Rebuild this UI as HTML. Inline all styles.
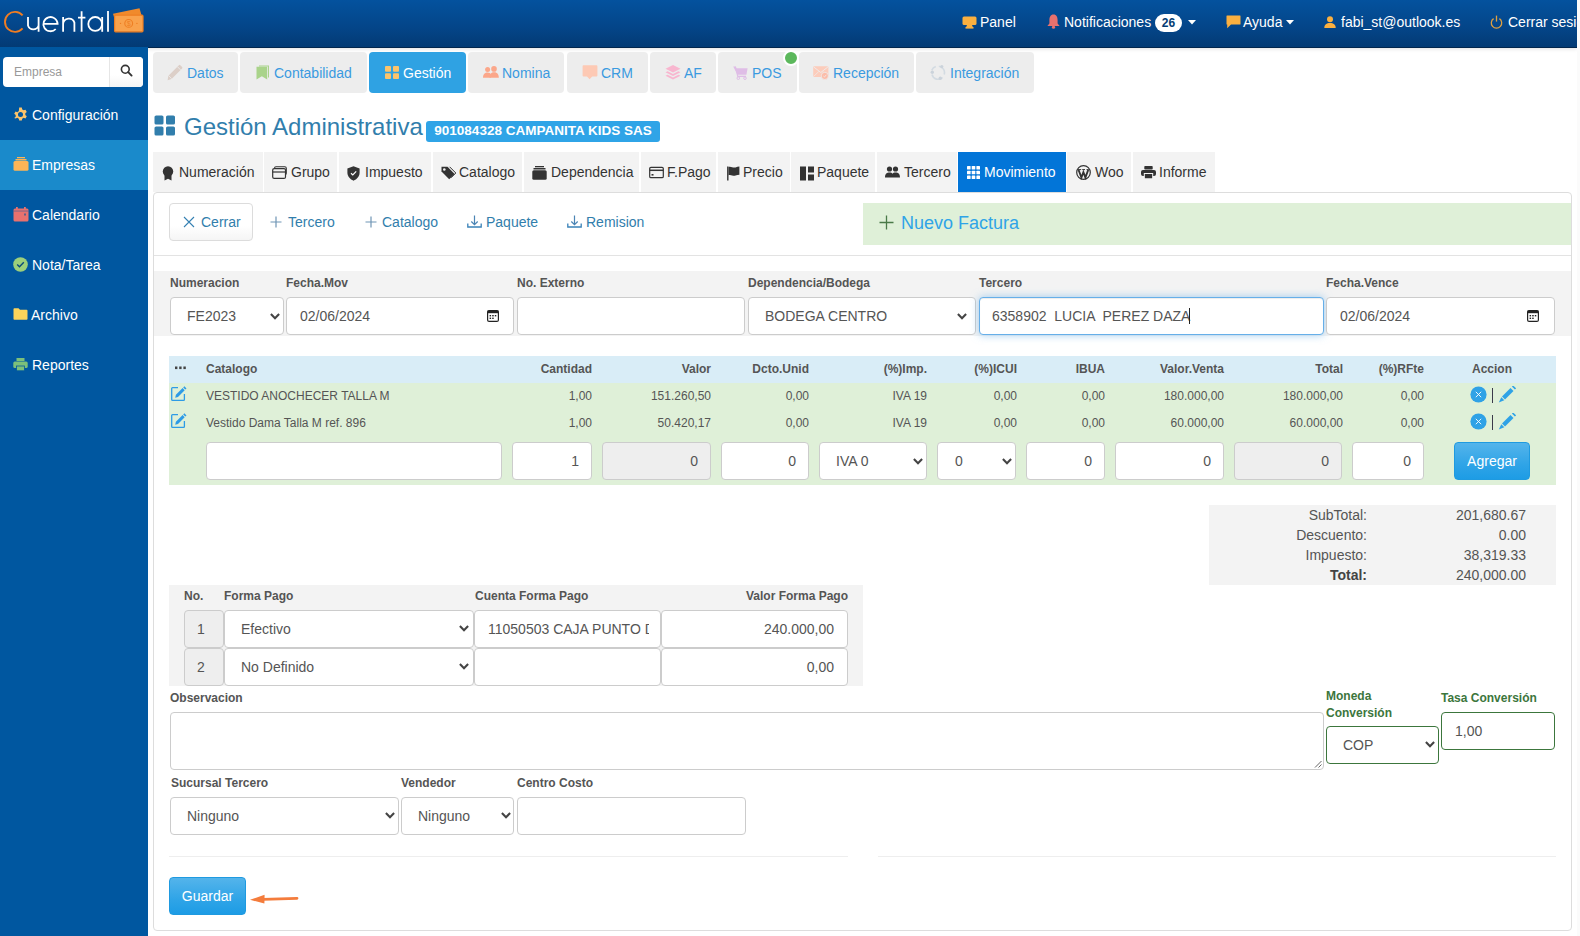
<!DOCTYPE html>
<html><head><meta charset="utf-8">
<style>
*{box-sizing:border-box}
html,body{margin:0;padding:0;width:1580px;height:936px;overflow:hidden;background:#fff;font-family:"Liberation Sans",sans-serif;color:#555}
.a{position:absolute}
svg{display:block}
#nav{left:0;top:0;width:1577px;height:48px;background:linear-gradient(#04529e,#044588 60%,#033a74);border-bottom:1px solid #02264d;box-shadow:0 1px 4px rgba(0,0,0,.12)}
.nt{color:#fff;font-size:14px;line-height:16px;top:14px;white-space:nowrap}
#strip{left:1577px;top:0;width:3px;height:936px;background:#fbfbfb}
#side{left:0;top:47px;width:148px;height:889px;background:#0057a0}
.si{left:0;width:148px;height:50px;color:#fff;font-size:14px}
.si .t{position:absolute;left:32px;top:17px;line-height:16px}
.si svg{position:absolute;left:13px;top:17px}
.tab{top:52px;height:41px;background:#ededed;border-radius:4px;color:#3a9ae0;font-size:14px}
.tab .t{position:absolute;top:13px;line-height:16px;white-space:nowrap}
.tab svg{position:absolute;top:13px}
.st{top:152px;height:40px;background:#f3f3f3;color:#333;font-size:14px}
.st .t{position:absolute;top:12px;line-height:16px;white-space:nowrap}
.st svg{position:absolute;top:13px}
.lbl{font-weight:bold;font-size:12px;line-height:14px;color:#555;white-space:nowrap}
.fc{background:#fff;border:1px solid #ccc;border-radius:4px;height:38px;color:#555;font-size:14px}
.fc .t{position:absolute;top:10px;line-height:16px;white-space:nowrap}
.chev{position:absolute;top:15px}
.th{font-weight:bold;font-size:12px;line-height:14px;color:#555;top:362px;white-space:nowrap}
.td{font-size:12px;line-height:14px;color:#555;white-space:nowrap}
.r{text-align:right}
.dis{background:#eee}
.btnp{background:linear-gradient(#54b4eb,#2fa4e7 60%,#1d9ce5);border:1px solid #1f9ae0;border-radius:4px;color:#fff;font-size:14px}
</style></head><body>

<!-- NAVBAR -->
<div id="nav" class="a"></div>
<div id="strip" class="a"></div>
<!-- logo -->
<svg class="a" style="left:0;top:0" width="150" height="46" viewBox="0 0 150 46">
 <path d="M22.6 15.4 A10 10 0 1 0 22.6 28.4" fill="none" stroke="#f07d22" stroke-width="1.9"/>
 <g fill="none" stroke="#fff" stroke-width="1.8">
  <path d="M28 17 V25.5 A5.6 5.6 0 0 0 38.6 25.5 V17 M38.6 24 V31.8"/>
  <path d="M43.6 23.9 H57.6 A7.1 7.1 0 1 0 55.7 29"/>
  <path d="M63.1 31.8 V17 M63.1 24 A5.8 5.8 0 0 1 74.4 22.6 V31.8"/>
  <path d="M81.6 11.3 V31.8 M78 17.7 H85.4"/>
  <circle cx="95.2" cy="23.9" r="6.9"/>
  <path d="M102.2 17 V31.8"/>
  <path d="M108 11 V31.8"/>
 </g>
 <path d="M113 13.7 L139.5 8.2 L142.3 18 L116 24 Z" fill="#f08a2c"/>
 <rect x="114.6" y="15.2" width="28.4" height="16.6" rx="1" fill="#f9a24c" stroke="#ee7e22" stroke-width="1.2"/>
 <circle cx="128.7" cy="23.4" r="3.9" fill="none" stroke="#ee7e22" stroke-width="1.1"/>
 <text x="128.7" y="26.2" font-size="7" font-family="Liberation Sans" fill="#ee7e22" text-anchor="middle">$</text>
 <circle cx="120.5" cy="23.4" r="0.7" fill="#ee7e22"/><circle cx="136.9" cy="23.4" r="0.7" fill="#ee7e22"/>
</svg>
<!-- nav items -->
<svg class="a" style="left:962px;top:16px" width="15" height="13" viewBox="0 0 15 13"><rect x="0.5" y="0.5" width="14" height="8.5" rx="1.5" fill="#fbb040"/><path d="M5 9 h5 l1 2.5 h-7z" fill="#fbb040"/><rect x="3.5" y="11" width="8" height="1.6" fill="#fbb040"/></svg>
<div class="a nt" style="left:980px">Panel</div>
<svg class="a" style="left:1047px;top:14px" width="13" height="15" viewBox="0 0 13 15"><path d="M6.5 0.5 C9.5 0.5 10.6 3 10.6 6 V9.5 L12.6 12 H0.4 L2.4 9.5 V6 C2.4 3 3.5 0.5 6.5 0.5Z" fill="#e8716e"/><circle cx="6.5" cy="13.2" r="1.6" fill="#e8716e"/></svg>
<div class="a nt" style="left:1064px">Notificaciones</div>
<div class="a" style="left:1155px;top:14px;width:27px;height:18px;border-radius:9px;background:#fff;color:#033c73;font-weight:bold;font-size:12px;line-height:18px;text-align:center">26</div>
<svg class="a" style="left:1188px;top:20px" width="8" height="5" viewBox="0 0 8 5"><path d="M0 0H8L4 4.5Z" fill="#fff"/></svg>
<svg class="a" style="left:1226px;top:15px" width="15" height="14" viewBox="0 0 15 14"><path d="M1 0.5 H14 Q14.5 .5 14.5 1 V9 Q14.5 9.6 14 9.6 H5 L1.2 13.3 V9.6 H1 Q.5 9.6 .5 9 V1 Q.5 .5 1 .5Z" fill="#fbb040"/></svg>
<div class="a nt" style="left:1243px">Ayuda</div>
<svg class="a" style="left:1286px;top:20px" width="8" height="5" viewBox="0 0 8 5"><path d="M0 0H8L4 4.5Z" fill="#fff"/></svg>
<svg class="a" style="left:1324px;top:16px" width="12" height="12" viewBox="0 0 12 12"><circle cx="6" cy="3.2" r="3" fill="#fbb040"/><path d="M0.3 12 C0.3 8.5 2.5 7 6 7 C9.5 7 11.7 8.5 11.7 12Z" fill="#fbb040"/></svg>
<div class="a nt" style="left:1341px">fabi_st@outlook.es</div>
<svg class="a" style="left:1490px;top:15px" width="13" height="14" viewBox="0 0 13 14"><path d="M3.6 3.6 A5.2 5.2 0 1 0 9.4 3.6" fill="none" stroke="#e0a040" stroke-width="1.3"/><path d="M6.5 .6 V6.6" stroke="#e0a040" stroke-width="1.3"/></svg>
<div class="a nt" style="left:1508px;width:69px;overflow:hidden">Cerrar sesión</div>


<!-- SIDEBAR -->
<div id="side" class="a"></div>
<div class="a" style="left:3px;top:57px;width:140px;height:30px;background:#fff;border-radius:4px"></div>
<div class="a" style="left:109px;top:57px;width:34px;height:30px;border-left:1px solid #e6e6e6;border-radius:0 4px 4px 0;background:linear-gradient(#fff,#fff 60%,#f5f5f5)"></div>
<div class="a" style="left:14px;top:65px;font-size:12px;line-height:14px;color:#999">Empresa</div>
<svg class="a" style="left:120px;top:64px" width="13" height="13" viewBox="0 0 13 13"><circle cx="5.3" cy="5.3" r="3.9" fill="none" stroke="#333" stroke-width="1.6"/><path d="M8.2 8.2 L11.6 11.6" stroke="#333" stroke-width="1.9" stroke-linecap="round"/></svg>
<svg class="a" style="left:13px;top:107px" width="15" height="15" viewBox="0 0 16 16"><path fill="#fcc46b" d="M6.6 0.5h2.8l.4 2.1a5.5 5.5 0 0 1 1.5.9l2-.7 1.4 2.4-1.6 1.4a5.5 5.5 0 0 1 0 1.8l1.6 1.4-1.4 2.4-2-.7a5.5 5.5 0 0 1-1.5.9l-.4 2.1H6.6l-.4-2.1a5.5 5.5 0 0 1-1.5-.9l-2 .7L1.3 11.8l1.6-1.4a5.5 5.5 0 0 1 0-1.8L1.3 7.2l1.4-2.4 2 .7a5.5 5.5 0 0 1 1.5-.9z M8 5.3a2.7 2.7 0 1 0 0 5.4 2.7 2.7 0 1 0 0-5.4z" fill-rule="evenodd"/></svg>
<div class="a" style="left:32px;top:107px;color:#fff;font-size:14px;line-height:16px">Configuración</div>
<div class="a" style="left:0;top:140px;width:148px;height:50px;background:#1a8acb"></div>
<svg class="a" style="left:13px;top:157px" width="16" height="14" viewBox="0 0 16 14"><rect x="4" y="0" width="8" height="1.3" fill="#fdb556"/><rect x="2.5" y="2" width="11" height="1.5" fill="#fdb556"/><rect x="0.5" y="4" width="15" height="9.8" rx="1.5" fill="#fdb556"/></svg>
<div class="a" style="left:32px;top:157px;color:#fff;font-size:14px;line-height:16px">Empresas</div>
<svg class="a" style="left:13px;top:207px" width="16" height="15" viewBox="0 0 16 15"><rect x="0.5" y="1.5" width="15" height="13" rx="1.5" fill="#e8716e"/><rect x="3" y="0" width="1.8" height="3" fill="#e8716e"/><rect x="11" y="0" width="1.8" height="3" fill="#e8716e"/><rect x="0.5" y="3.6" width="15" height="0.9" fill="#0057a0" opacity=".5"/><rect x="11" y="6.5" width="2" height="2" fill="#0057a0" opacity=".6"/></svg>
<div class="a" style="left:32px;top:207px;color:#fff;font-size:14px;line-height:16px">Calendario</div>
<svg class="a" style="left:13px;top:257px" width="15" height="15" viewBox="0 0 15 15"><circle cx="7.5" cy="7.5" r="7.3" fill="#9ccf7b"/><path d="M4.2 7.6 L6.5 9.8 L10.8 5.3" fill="none" stroke="#0a4a7a" stroke-width="1.4"/></svg>
<div class="a" style="left:32px;top:257px;color:#fff;font-size:14px;line-height:16px">Nota/Tarea</div>
<svg class="a" style="left:13px;top:308px" width="15" height="12" viewBox="0 0 15 12"><path d="M0.5 1.2 Q.5 .3 1.4 .3 H5.5 L7 1.8 H13.6 Q14.5 1.8 14.5 2.7 V11 Q14.5 11.7 13.6 11.7 H1.4 Q.5 11.7 .5 11Z" fill="#fcd45b"/></svg>
<div class="a" style="left:31px;top:307px;color:#fff;font-size:14px;line-height:16px">Archivo</div>
<svg class="a" style="left:13px;top:358px" width="15" height="13" viewBox="0 0 15 13"><rect x="3.5" y="0" width="8" height="3" fill="#7cc07a"/><rect x="0.3" y="3.5" width="14.4" height="6.5" rx="1.5" fill="#7cc07a"/><rect x="3.5" y="8" width="8" height="4.8" fill="#7cc07a" stroke="#0057a0" stroke-width=".8"/></svg>
<div class="a" style="left:32px;top:357px;color:#fff;font-size:14px;line-height:16px">Reportes</div>



<!-- MAIN TABS -->
<div class="a tab" style="left:153px;width:85px"><svg style="left:14px;top:12px" width="17" height="17" viewBox="0 0 17 17"><path d="M1.4 11.7 L11.9 1.2 Q12.6 .5 13.3 1.2 L15.1 3 Q15.8 3.7 15.1 4.4 L4.6 14.9 L0.6 16.2Z" fill="#dccfc8"/><path d="M10.4 2.7 L13.6 5.9" stroke="#ededed" stroke-width="0.9"/><path d="M1.6 11.6 L4.7 14.7" stroke="#ededed" stroke-width="0.8"/></svg><div class="t" style="left:34px">Datos</div></div>
<div class="a tab" style="left:240px;width:127px"><svg style="left:16px;top:13px" width="14" height="15" viewBox="0 0 14 15"><path d="M3 0.5 H13 V12.5 H12 V1.5 H3Z" fill="#a9d38a"/><path d="M0.5 1.8 H11.2 V14.6 L5.85 11.3 L0.5 14.6Z" fill="#a9d38a"/></svg><div class="t" style="left:34px">Contabilidad</div></div>
<div class="a tab" style="left:369px;width:97px;background:#2fa2e3;color:#fff"><svg style="left:16px;top:14px" width="14" height="13" viewBox="0 0 14 13"><rect x="0" y="0" width="6" height="5.8" rx="1" fill="#fcc46b"/><rect x="8" y="0" width="6" height="5.8" rx="1" fill="#fcc46b"/><rect x="0" y="7.2" width="6" height="5.8" rx="1" fill="#fcc46b"/><rect x="8" y="7.2" width="6" height="5.8" rx="1" fill="#fcc46b"/></svg><div class="t" style="left:34px">Gestión</div></div>
<div class="a tab" style="left:468px;width:96px"><svg style="left:15px;top:14px" width="16" height="12" viewBox="0 0 16 12"><circle cx="4.6" cy="3.4" r="2.5" fill="#fba78a"/><circle cx="11" cy="2.9" r="2.8" fill="#fba78a"/><path d="M0 11.8 C0 8 2 6.6 4.6 6.6 C6.5 6.6 7.5 7.5 7.8 8.5 V11.8Z" fill="#fba78a"/><path d="M6.5 11.8 C6.5 7.5 8.5 6.2 11 6.2 C13.8 6.2 15.8 7.5 15.8 11.8Z" fill="#fba78a"/></svg><div class="t" style="left:34px">Nomina</div></div>
<div class="a tab" style="left:567px;width:81px"><svg style="left:15px;top:13px" width="16" height="15" viewBox="0 0 16 15"><path d="M1.5 0.3 H14.5 Q15.4 .3 15.4 1.2 V10.6 Q15.4 11.5 14.5 11.5 H10.2 L7.6 14.2 L5 11.5 H1.5 Q.6 11.5 .6 10.6 V1.2 Q.6 .3 1.5 .3Z" fill="#fdc9b4"/></svg><div class="t" style="left:34px">CRM</div></div>
<div class="a tab" style="left:650px;width:66px"><svg style="left:15px;top:13px" width="16" height="15" viewBox="0 0 16 15"><path d="M8 0 L15.5 3.8 L8 7.6 L0.5 3.8Z" fill="#f8b6cf"/><path d="M0.5 7.3 L2.6 6.2 L8 9 L13.4 6.2 L15.5 7.3 L8 11.1Z" fill="#f8b6cf"/><path d="M0.5 10.8 L2.6 9.7 L8 12.5 L13.4 9.7 L15.5 10.8 L8 14.6Z" fill="#f8b6cf"/></svg><div class="t" style="left:34px">AF</div></div>
<div class="a tab" style="left:718px;width:79px"><svg style="left:15px;top:14px" width="15" height="14" viewBox="0 0 15 14"><path d="M0.2 0.6 H2.6 L3.3 2.2 H14.6 L13.4 8.8 H4.5Z" fill="#dfbde6"/><path d="M2.4 0.6 L4.8 10.4 H13" fill="none" stroke="#dfbde6" stroke-width="1.2"/><circle cx="5.3" cy="12.2" r="1.3" fill="none" stroke="#dfbde6" stroke-width="1"/><circle cx="12" cy="12.2" r="1.3" fill="none" stroke="#dfbde6" stroke-width="1"/></svg><div class="t" style="left:34px">POS</div></div>
<div class="a" style="left:783px;top:50px;width:16px;height:16px;border-radius:50%;background:#5cb85c;border:2px solid #fff"></div>
<div class="a tab" style="left:799px;width:115px"><svg style="left:14px;top:14px" width="16" height="14" viewBox="0 0 16 14"><rect x="0.2" y="0.2" width="15.2" height="10.8" rx="1" fill="#fcccbb"/><path d="M0.5 0.8 L7.8 6.5 L15 0.8" fill="none" stroke="#ededed" stroke-width="0.9"/><path d="M0.5 10.5 L5.8 5.5 M15 10.5 L9.8 5.5" stroke="#ededed" stroke-width="0.7"/><circle cx="11.8" cy="9.9" r="3.6" fill="#fcbca8" stroke="#ededed" stroke-width="0.8"/><path d="M10.4 10 L11.5 11 L13.3 8.8" fill="none" stroke="#ededed" stroke-width="0.8"/></svg><div class="t" style="left:34px">Recepción</div></div>
<div class="a tab" style="left:916px;width:118px"><svg style="left:14px;top:13px" width="16" height="15" viewBox="0 0 16 15"><path d="M8.8 1.3 A6.3 6.3 0 0 1 14.2 9.5 M12.6 12.5 A6.3 6.3 0 0 1 2 9.5 M1.8 5.2 A6.3 6.3 0 0 1 5.8 1.5" fill="none" stroke="#d3dbe2" stroke-width="1.6"/><circle cx="11.8" cy="1.6" r="1.6" fill="#cbd3db"/><circle cx="2.3" cy="7.2" r="1.7" fill="#cbd3db"/><circle cx="10.3" cy="13.2" r="1.7" fill="#cbd3db"/></svg><div class="t" style="left:34px">Integración</div></div>

<!-- TITLE -->
<svg class="a" style="left:154px;top:115px" width="22" height="21" viewBox="0 0 22 21"><rect x="0.5" y="0.5" width="9" height="9" rx="1.6" fill="#317eac"/><rect x="12" y="0.5" width="9" height="9" rx="1.6" fill="#317eac"/><rect x="0.5" y="11.5" width="9" height="9" rx="1.6" fill="#317eac"/><rect x="12" y="11.5" width="9" height="9" rx="1.6" fill="#317eac"/></svg>
<div class="a" style="left:184px;top:114px;font-size:24px;line-height:26px;color:#317eac;white-space:nowrap">Gestión Administrativa</div>
<div class="a" style="left:426px;top:121px;width:234px;height:21px;border-radius:3px;background:#2fa4e7;color:#fff;font-weight:bold;font-size:13.5px;line-height:19px;text-align:center;white-space:nowrap">901084328 CAMPANITA KIDS SAS</div>


<!-- SUB TABS -->
<div class="a" style="left:153px;top:192px;width:1419px;height:739px;border:1px solid #ddd;border-radius:4px"></div>
<div class="a st" style="left:153px;width:110px"><div class="t" style="left:26px">Numeración</div></div><svg class="a" style="left:162px;top:166px" width="12" height="15" viewBox="0 0 12 15"><circle cx="6" cy="5.5" r="5.2" fill="#333"/><path d="M2.5 9.5 L2.5 14.5 L6 12.8 L9.5 14.5 L9.5 9.5Z" fill="#333"/></svg>
<div class="a st" style="left:264px;width:73px"><div class="t" style="left:27px">Grupo</div></div><svg class="a" style="left:272px;top:166px" width="15" height="13" viewBox="0 0 15 13"><rect x="2.5" y="0.7" width="11.8" height="8" rx="1.5" fill="none" stroke="#333" stroke-width="1.1"/><rect x="0.7" y="2.6" width="12.8" height="9.8" rx="1.5" fill="#f3f3f3" stroke="#333" stroke-width="1.2"/><path d="M0.7 6 H13.5" stroke="#333" stroke-width="1.2"/></svg>
<div class="a st" style="left:339px;width:92px"><div class="t" style="left:26px">Impuesto</div></div><svg class="a" style="left:347px;top:166px" width="13" height="15" viewBox="0 0 13 15"><path d="M6.5 0.3 L12.6 2.6 V6.5 C12.6 10.5 9.8 13.3 6.5 14.7 C3.2 13.3 0.4 10.5 0.4 6.5 V2.6Z" fill="#333"/><path d="M4 7.3 L5.8 9 L9.2 5.4" fill="none" stroke="#fff" stroke-width="1.2"/></svg>
<div class="a st" style="left:433px;width:89px"><div class="t" style="left:26px">Catalogo</div></div><svg class="a" style="left:441px;top:166px" width="15" height="14" viewBox="0 0 15 14"><path d="M0.5 0.8 H6.5 L13.6 7.9 L8.2 13.3 L0.5 5.6Z" fill="#333"/><circle cx="3.3" cy="3.5" r="1.3" fill="#f3f3f3"/><path d="M8.6 0.8 L14.8 7 L10 11.8" fill="none" stroke="#333" stroke-width="1"/></svg>
<div class="a st" style="left:524px;width:115px"><div class="t" style="left:27px">Dependencia</div></div><svg class="a" style="left:532px;top:166px" width="15" height="14" viewBox="0 0 15 14"><rect x="3" y="0" width="9" height="1.3" fill="#333"/><rect x="1.5" y="2" width="12" height="1.5" fill="#333"/><rect x="0.3" y="4.3" width="14.4" height="9.5" rx="1.5" fill="#333"/></svg>
<div class="a st" style="left:641px;width:75px"><div class="t" style="left:26px">F.Pago</div></div><svg class="a" style="left:649px;top:166px" width="15" height="13" viewBox="0 0 15 13"><rect x="0.7" y="1.3" width="13.6" height="10.4" rx="1.3" fill="none" stroke="#333" stroke-width="1.2"/><path d="M0.7 4.3 H14.3" stroke="#333" stroke-width="1.5"/><rect x="2.5" y="8" width="2" height="1.6" fill="#333"/></svg>
<div class="a st" style="left:718px;width:72px"><div class="t" style="left:25px">Precio</div></div><svg class="a" style="left:727px;top:166px" width="13" height="15" viewBox="0 0 13 15"><path d="M0.8 0.5 V14.6" stroke="#333" stroke-width="1.4"/><path d="M1.5 1 C4 0 6 2.2 8.5 1.4 C10 1 11 0.8 12.4 0.6 V8.8 C11 9 10 9.2 8.5 9.6 C6 10.4 4 8.2 1.5 9.2Z" fill="#333"/></svg>
<div class="a st" style="left:791px;width:84px"><div class="t" style="left:26px">Paquete</div></div><svg class="a" style="left:800px;top:166px" width="14" height="15" viewBox="0 0 14 15"><rect x="0" y="0.5" width="6" height="14" fill="#333"/><rect x="8" y="0.5" width="6" height="6" fill="#333"/><rect x="8" y="8.5" width="6" height="6" fill="#333"/></svg>
<div class="a st" style="left:877px;width:80px"><div class="t" style="left:27px">Tercero</div></div><svg class="a" style="left:885px;top:166px" width="15" height="12" viewBox="0 0 15 12"><circle cx="4.5" cy="3" r="2.6" fill="#333"/><circle cx="10.5" cy="3" r="2.6" fill="#333"/><path d="M0 11.5 C0 7.5 2 6.5 4.5 6.5 C6 6.5 7 7 7.5 7.8 C8 7 9 6.5 10.5 6.5 C13 6.5 15 7.5 15 11.5Z" fill="#333"/></svg>
<div class="a st" style="left:958px;width:108px;background:#0275d8;color:#fff"><div class="t" style="left:26px">Movimiento</div></div>
<svg class="a" style="left:967px;top:166px" width="13" height="13" viewBox="0 0 13 13" fill="#fff"><rect x="0" y="0" width="3.6" height="3.6" rx=".6"/><rect x="4.7" y="0" width="3.6" height="3.6" rx=".6"/><rect x="9.4" y="0" width="3.6" height="3.6" rx=".6"/><rect x="0" y="4.7" width="3.6" height="3.6" rx=".6"/><rect x="4.7" y="4.7" width="3.6" height="3.6" rx=".6"/><rect x="9.4" y="4.7" width="3.6" height="3.6" rx=".6"/><rect x="0" y="9.4" width="3.6" height="3.6" rx=".6"/><rect x="4.7" y="9.4" width="3.6" height="3.6" rx=".6"/><rect x="9.4" y="9.4" width="3.6" height="3.6" rx=".6"/></svg>
<div class="a st" style="left:1067px;width:64px"><div class="t" style="left:28px">Woo</div></div>
<svg class="a" style="left:1076px;top:165px" width="15" height="15" viewBox="0 0 15 15"><circle cx="7.5" cy="7.5" r="6.8" fill="none" stroke="#333" stroke-width="1.2"/><path d="M2.6 5 L5.4 12.5 L7.4 7.2 L9.4 12.5 L12.2 5" fill="none" stroke="#333" stroke-width="1.9"/><path d="M2 4.6 H5.2 M6.2 4.6 H9 M10.5 4.6 H12.8" stroke="#333" stroke-width="1"/></svg>
<div class="a st" style="left:1133px;width:82px"><div class="t" style="left:26px">Informe</div></div>
<svg class="a" style="left:1141px;top:166px" width="15" height="13" viewBox="0 0 15 13"><rect x="3.3" y="0" width="8.4" height="3.5" rx=".8" fill="#333"/><rect x="0" y="4" width="15" height="6" rx="2" fill="#333"/><rect x="3.3" y="7.5" width="8.4" height="5.3" fill="#333" stroke="#f3f3f3" stroke-width="1"/></svg>


<!-- ACTION BAR -->
<div class="a" style="left:169px;top:203px;width:84px;height:38px;border:1px solid #dcdcdc;border-radius:4px;background:linear-gradient(#fff,#fff 60%,#f5f5f5)"></div>
<svg class="a" style="left:183px;top:216px" width="12" height="12" viewBox="0 0 12 12"><path d="M1 1 L11 11 M11 1 L1 11" stroke="#3580b2" stroke-width="1.1"/></svg>
<div class="a" style="left:201px;top:214px;font-size:14px;line-height:16px;color:#317eac">Cerrar</div>
<svg class="a" style="left:270px;top:216px" width="12" height="12" viewBox="0 0 12 12"><path d="M6 0.5 V11.5 M0.5 6 H11.5" stroke="#6f95b5" stroke-width="1.2"/></svg>
<div class="a" style="left:288px;top:214px;font-size:14px;line-height:16px;color:#317eac">Tercero</div>
<svg class="a" style="left:365px;top:216px" width="12" height="12" viewBox="0 0 12 12"><path d="M6 0.5 V11.5 M0.5 6 H11.5" stroke="#6f95b5" stroke-width="1.2"/></svg>
<div class="a" style="left:382px;top:214px;font-size:14px;line-height:16px;color:#317eac">Catalogo</div>
<svg class="a" style="left:467px;top:215px" width="15" height="13" viewBox="0 0 15 13"><path d="M7.5 0.5 V9.5 M4.3 6.5 L7.5 9.6 L10.7 6.5" fill="none" stroke="#4a84b4" stroke-width="1.2"/><path d="M0.8 8.5 V12 H14.2 V8.5" fill="none" stroke="#3a82b8" stroke-width="1.3"/></svg>
<div class="a" style="left:486px;top:214px;font-size:14px;line-height:16px;color:#317eac">Paquete</div>
<svg class="a" style="left:567px;top:215px" width="15" height="13" viewBox="0 0 15 13"><path d="M7.5 0.5 V9.5 M4.3 6.5 L7.5 9.6 L10.7 6.5" fill="none" stroke="#4a84b4" stroke-width="1.2"/><path d="M0.8 8.5 V12 H14.2 V8.5" fill="none" stroke="#3a82b8" stroke-width="1.3"/></svg>
<div class="a" style="left:586px;top:214px;font-size:14px;line-height:16px;color:#317eac">Remision</div>
<div class="a" style="left:863px;top:203px;width:708px;height:42px;background:#dff0d8"></div>
<svg class="a" style="left:879px;top:215px" width="15" height="15" viewBox="0 0 15 15"><path d="M7.5 0.5 V14.5 M0.5 7.5 H14.5" stroke="#4a7a48" stroke-width="1.3"/></svg>
<div class="a" style="left:901px;top:213px;font-size:18px;line-height:20px;color:#2fa4e7">Nuevo Factura</div>
<div class="a" style="left:154px;top:255px;width:1417px;height:1px;background:#e3e3e3"></div>

<!-- FORM BAND -->
<div class="a" style="left:154px;top:271px;width:1417px;height:65px;background:#f3f3f3"></div>
<div class="a lbl" style="left:170px;top:276px">Numeracion</div>
<div class="a lbl" style="left:286px;top:276px">Fecha.Mov</div>
<div class="a lbl" style="left:517px;top:276px">No. Externo</div>
<div class="a lbl" style="left:748px;top:276px">Dependencia/Bodega</div>
<div class="a lbl" style="left:979px;top:276px">Tercero</div>
<div class="a lbl" style="left:1326px;top:276px">Fecha.Vence</div>
<div class="a fc" style="left:170px;top:297px;width:114px"><div class="t" style="left:16px">FE2023</div></div>
<svg class="a" style="left:270px;top:313px" width="10" height="7" viewBox="0 0 10 7"><path d="M0.9 1.1 L5 5.2 L9.1 1.1" fill="none" stroke="#444" stroke-width="2.1"/></svg>
<div class="a fc" style="left:286px;top:297px;width:228px"><div class="t" style="left:13px">02/06/2024</div></div>
<svg class="a" style="left:487px;top:310px" width="12" height="12" viewBox="0 0 12 12"><rect x="0.6" y="0.6" width="10.8" height="10.8" rx="1.5" fill="none" stroke="#222" stroke-width="1.2"/><rect x="0.6" y="0.6" width="10.8" height="2.6" fill="#222"/><rect x="2.6" y="5" width="1.5" height="1.4" fill="#222"/><rect x="5.2" y="5" width="1.5" height="1.4" fill="#222"/><rect x="7.8" y="5" width="1.5" height="1.4" fill="#222"/><rect x="2.6" y="7.6" width="1.5" height="1.4" fill="#222"/><rect x="5.2" y="7.6" width="1.5" height="1.4" fill="#222"/></svg>
<div class="a fc" style="left:517px;top:297px;width:228px"></div>
<div class="a fc" style="left:748px;top:297px;width:228px"><div class="t" style="left:16px">BODEGA CENTRO</div></div>
<svg class="a" style="left:957px;top:313px" width="10" height="7" viewBox="0 0 10 7"><path d="M0.9 1.1 L5 5.2 L9.1 1.1" fill="none" stroke="#444" stroke-width="2.1"/></svg>
<div class="a fc" style="left:979px;top:297px;width:345px;border-color:#66afe9;box-shadow:inset 0 1px 1px rgba(0,0,0,.075),0 0 8px rgba(102,175,233,.6)"><div class="t" style="left:12px;white-space:pre">6358902  LUCIA  PEREZ DAZA</div></div>
<div class="a" style="left:1189px;top:308px;width:1px;height:16px;background:#222"></div>
<div class="a fc" style="left:1326px;top:297px;width:229px"><div class="t" style="left:13px">02/06/2024</div></div>
<svg class="a" style="left:1527px;top:310px" width="12" height="12" viewBox="0 0 12 12"><rect x="0.6" y="0.6" width="10.8" height="10.8" rx="1.5" fill="none" stroke="#222" stroke-width="1.2"/><rect x="0.6" y="0.6" width="10.8" height="2.6" fill="#222"/><rect x="2.6" y="5" width="1.5" height="1.4" fill="#222"/><rect x="5.2" y="5" width="1.5" height="1.4" fill="#222"/><rect x="7.8" y="5" width="1.5" height="1.4" fill="#222"/><rect x="2.6" y="7.6" width="1.5" height="1.4" fill="#222"/><rect x="5.2" y="7.6" width="1.5" height="1.4" fill="#222"/></svg>


<!-- ITEMS TABLE -->
<div class="a" style="left:169px;top:356px;width:1387px;height:27px;background:#d9edf7"></div>
<div class="a" style="left:169px;top:383px;width:1387px;height:102px;background:#dff0d8"></div>
<svg class="a" style="left:175px;top:366px" width="11" height="4" viewBox="0 0 11 4" fill="#444"><rect x="0" y="0.5" width="2.4" height="2.6"/><rect x="4.2" y="0.5" width="2.4" height="2.6"/><rect x="8.4" y="0.5" width="2.4" height="2.6"/></svg>
<div class="a th" style="left:206px">Catalogo</div>
<div class="a th r" style="left:442px;width:150px">Cantidad</div>
<div class="a th r" style="left:561px;width:150px">Valor</div>
<div class="a th r" style="left:659px;width:150px">Dcto.Unid</div>
<div class="a th r" style="left:777px;width:150px">(%)Imp.</div>
<div class="a th r" style="left:867px;width:150px">(%)ICUI</div>
<div class="a th r" style="left:955px;width:150px">IBUA</div>
<div class="a th r" style="left:1074px;width:150px">Valor.Venta</div>
<div class="a th r" style="left:1193px;width:150px">Total</div>
<div class="a th r" style="left:1274px;width:150px">(%)RFte</div>
<div class="a th" style="left:1442px;width:100px;text-align:center">Accion</div>
<svg class="a" style="left:171px;top:386px" width="16" height="15" viewBox="0 0 16 15"><path d="M7 1.6 H1.6 Q.7 1.6 .7 2.5 V13.4 Q.7 14.3 1.6 14.3 H12.5 Q13.4 14.3 13.4 13.4 V8" fill="none" stroke="#2d9be6" stroke-width="1.3"/><path d="M13.4 0.3 L15.5 2.4 L14.3 3.6 L12.2 1.5Z M11.6 2.1 L13.7 4.2 L7 10.9 L4.2 11.8 L4.9 8.8Z" fill="#2d9be6"/></svg>
<div class="a td" style="left:206px;top:389px">VESTIDO ANOCHECER TALLA M</div>
<div class="a td r" style="left:442px;top:389px;width:150px">1,00</div>
<div class="a td r" style="left:561px;top:389px;width:150px">151.260,50</div>
<div class="a td r" style="left:659px;top:389px;width:150px">0,00</div>
<div class="a td r" style="left:777px;top:389px;width:150px">IVA 19</div>
<div class="a td r" style="left:867px;top:389px;width:150px">0,00</div>
<div class="a td r" style="left:955px;top:389px;width:150px">0,00</div>
<div class="a td r" style="left:1074px;top:389px;width:150px">180.000,00</div>
<div class="a td r" style="left:1193px;top:389px;width:150px">180.000,00</div>
<div class="a td r" style="left:1274px;top:389px;width:150px">0,00</div>
<svg class="a" style="left:1470px;top:386px" width="17" height="17" viewBox="0 0 17 17"><circle cx="8.5" cy="8.5" r="8.1" fill="#2fa2e6"/><path d="M5.8 5.8 L11.2 11.2 M11.2 5.8 L5.8 11.2" stroke="#fff" stroke-width="0.9"/></svg>
<div class="a" style="left:1492px;top:388px;width:1px;height:15px;background:#3a3a4a"></div>
<svg class="a" style="left:1498px;top:386px" width="18" height="17" viewBox="0 0 18 17"><path d="M13.9 0.6 L15.1 -0.6 L18.1 2.4 L16.9 3.6Z" fill="#2fa2e6"/><path d="M4.0 10.5 L12.5 2.0 L15.5 5.0 L7.0 13.5Z" fill="#2fa2e6"/><path d="M3.3 11.3 L6.3 14.3 L0.8 16.6Z" fill="#2fa2e6"/></svg>
<svg class="a" style="left:171px;top:413px" width="16" height="15" viewBox="0 0 16 15"><path d="M7 1.6 H1.6 Q.7 1.6 .7 2.5 V13.4 Q.7 14.3 1.6 14.3 H12.5 Q13.4 14.3 13.4 13.4 V8" fill="none" stroke="#2d9be6" stroke-width="1.3"/><path d="M13.4 0.3 L15.5 2.4 L14.3 3.6 L12.2 1.5Z M11.6 2.1 L13.7 4.2 L7 10.9 L4.2 11.8 L4.9 8.8Z" fill="#2d9be6"/></svg>
<div class="a td" style="left:206px;top:416px">Vestido Dama Talla M ref. 896</div>
<div class="a td r" style="left:442px;top:416px;width:150px">1,00</div>
<div class="a td r" style="left:561px;top:416px;width:150px">50.420,17</div>
<div class="a td r" style="left:659px;top:416px;width:150px">0,00</div>
<div class="a td r" style="left:777px;top:416px;width:150px">IVA 19</div>
<div class="a td r" style="left:867px;top:416px;width:150px">0,00</div>
<div class="a td r" style="left:955px;top:416px;width:150px">0,00</div>
<div class="a td r" style="left:1074px;top:416px;width:150px">60.000,00</div>
<div class="a td r" style="left:1193px;top:416px;width:150px">60.000,00</div>
<div class="a td r" style="left:1274px;top:416px;width:150px">0,00</div>
<svg class="a" style="left:1470px;top:413px" width="17" height="17" viewBox="0 0 17 17"><circle cx="8.5" cy="8.5" r="8.1" fill="#2fa2e6"/><path d="M5.8 5.8 L11.2 11.2 M11.2 5.8 L5.8 11.2" stroke="#fff" stroke-width="0.9"/></svg>
<div class="a" style="left:1492px;top:415px;width:1px;height:15px;background:#3a3a4a"></div>
<svg class="a" style="left:1498px;top:413px" width="18" height="17" viewBox="0 0 18 17"><path d="M13.9 0.6 L15.1 -0.6 L18.1 2.4 L16.9 3.6Z" fill="#2fa2e6"/><path d="M4.0 10.5 L12.5 2.0 L15.5 5.0 L7.0 13.5Z" fill="#2fa2e6"/><path d="M3.3 11.3 L6.3 14.3 L0.8 16.6Z" fill="#2fa2e6"/></svg>
<div class="a fc" style="left:206px;top:442px;width:296px"></div>
<div class="a fc" style="left:512px;top:442px;width:80px"><div class="t" style="right:12px">1</div></div>
<div class="a fc dis" style="left:602px;top:442px;width:109px"><div class="t" style="right:12px">0</div></div>
<div class="a fc" style="left:721px;top:442px;width:88px"><div class="t" style="right:12px">0</div></div>
<div class="a fc" style="left:819px;top:442px;width:108px"><div class="t" style="left:16px">IVA 0</div></div>
<svg class="a" style="left:913px;top:458px" width="10" height="7" viewBox="0 0 10 7"><path d="M0.9 1.1 L5 5.2 L9.1 1.1" fill="none" stroke="#444" stroke-width="2.1"/></svg>
<div class="a fc" style="left:937px;top:442px;width:79px"><div class="t" style="left:17px">0</div></div>
<svg class="a" style="left:1002px;top:458px" width="10" height="7" viewBox="0 0 10 7"><path d="M0.9 1.1 L5 5.2 L9.1 1.1" fill="none" stroke="#444" stroke-width="2.1"/></svg>
<div class="a fc" style="left:1026px;top:442px;width:79px"><div class="t" style="right:12px">0</div></div>
<div class="a fc" style="left:1115px;top:442px;width:109px"><div class="t" style="right:12px">0</div></div>
<div class="a fc dis" style="left:1234px;top:442px;width:108px"><div class="t" style="right:12px">0</div></div>
<div class="a fc" style="left:1352px;top:442px;width:72px"><div class="t" style="right:12px">0</div></div>
<div class="a btnp" style="left:1454px;top:442px;width:76px;height:38px"><div class="a" style="left:0;top:10px;width:74px;text-align:center;line-height:16px">Agregar</div></div>


<!-- SUMMARY -->
<div class="a" style="left:1209px;top:505px;width:347px;height:80px;background:#f3f3f3"></div>
<div class="a r" style="left:1217px;top:505px;width:150px;font-size:14px;line-height:20px;color:#555">SubTotal:<br>Descuento:<br>Impuesto:<br><b style="color:#444">Total:</b></div>
<div class="a r" style="left:1376px;top:505px;width:150px;font-size:14px;line-height:20px;color:#555">201,680.67<br>0.00<br>38,319.33<br>240,000.00</div>

<!-- FORMA PAGO -->
<div class="a" style="left:169px;top:585px;width:694px;height:101px;background:#f3f3f3"></div>
<div class="a lbl" style="left:184px;top:589px">No.</div>
<div class="a lbl" style="left:224px;top:589px">Forma Pago</div>
<div class="a lbl" style="left:475px;top:589px">Cuenta Forma Pago</div>
<div class="a lbl r" style="left:648px;top:589px;width:200px">Valor Forma Pago</div>
<div class="a fc dis" style="left:184px;top:610px;width:40px"><div class="t" style="left:12px">1</div></div>
<div class="a fc" style="left:224px;top:610px;width:250px"><div class="t" style="left:16px">Efectivo</div></div>
<svg class="a" style="left:459px;top:625px" width="10" height="7" viewBox="0 0 10 7"><path d="M0.9 1.1 L5 5.2 L9.1 1.1" fill="none" stroke="#444" stroke-width="2.1"/></svg>
<div class="a fc" style="left:474px;top:610px;width:187px;overflow:hidden"><div class="t" style="left:13px;width:161px;overflow:hidden">11050503 CAJA PUNTO DE VENTA</div></div>
<div class="a fc" style="left:661px;top:610px;width:187px"><div class="t" style="right:13px">240.000,00</div></div>
<div class="a fc dis" style="left:184px;top:648px;width:40px"><div class="t" style="left:12px">2</div></div>
<div class="a fc" style="left:224px;top:648px;width:250px"><div class="t" style="left:16px">No Definido</div></div>
<svg class="a" style="left:459px;top:663px" width="10" height="7" viewBox="0 0 10 7"><path d="M0.9 1.1 L5 5.2 L9.1 1.1" fill="none" stroke="#444" stroke-width="2.1"/></svg>
<div class="a fc" style="left:474px;top:648px;width:187px"></div>
<div class="a fc" style="left:661px;top:648px;width:187px"><div class="t" style="right:13px">0,00</div></div>

<!-- OBSERVACION -->
<div class="a lbl" style="left:170px;top:691px">Observacion</div>
<div class="a fc" style="left:170px;top:712px;width:1154px;height:58px"></div>
<svg class="a" style="left:1314px;top:760px" width="8" height="8" viewBox="0 0 8 8"><path d="M7.5 1 L1 7.5 M7.5 4.5 L4.5 7.5" stroke="#555" stroke-width="0.9"/></svg>
<div class="a lbl" style="left:1326px;top:688px;line-height:17px;color:#3c763d">Moneda<br>Conversión</div>
<div class="a fc" style="left:1326px;top:726px;width:113px;border-color:#3c763d"><div class="t" style="left:16px">COP</div></div>
<svg class="a" style="left:1425px;top:741px" width="10" height="7" viewBox="0 0 10 7"><path d="M0.9 1.1 L5 5.2 L9.1 1.1" fill="none" stroke="#444" stroke-width="2.1"/></svg>
<div class="a lbl" style="left:1441px;top:691px;color:#3c763d">Tasa Conversión</div>
<div class="a fc" style="left:1441px;top:712px;width:114px;border-color:#3c763d"><div class="t" style="left:13px">1,00</div></div>

<div class="a lbl" style="left:171px;top:776px">Sucursal Tercero</div>
<div class="a lbl" style="left:401px;top:776px">Vendedor</div>
<div class="a lbl" style="left:517px;top:776px">Centro Costo</div>
<div class="a fc" style="left:170px;top:797px;width:229px"><div class="t" style="left:16px">Ninguno</div></div>
<svg class="a" style="left:385px;top:812px" width="10" height="7" viewBox="0 0 10 7"><path d="M0.9 1.1 L5 5.2 L9.1 1.1" fill="none" stroke="#444" stroke-width="2.1"/></svg>
<div class="a fc" style="left:401px;top:797px;width:113px"><div class="t" style="left:16px">Ninguno</div></div>
<svg class="a" style="left:501px;top:812px" width="10" height="7" viewBox="0 0 10 7"><path d="M0.9 1.1 L5 5.2 L9.1 1.1" fill="none" stroke="#444" stroke-width="2.1"/></svg>
<div class="a fc" style="left:517px;top:797px;width:229px"></div>

<div class="a" style="left:169px;top:856px;width:679px;height:1px;background:#eee"></div>
<div class="a" style="left:878px;top:856px;width:678px;height:1px;background:#eee"></div>
<div class="a btnp" style="left:169px;top:877px;width:77px;height:38px"><div class="a" style="left:0;top:10px;width:75px;text-align:center;line-height:16px">Guardar</div></div>
<svg class="a" style="left:249px;top:893px" width="50" height="12" viewBox="0 0 50 12"><path d="M14 6.4 L48 5.4" stroke="#f47c3c" stroke-width="2.8" stroke-linecap="round"/><path d="M1 6.8 L15.6 1.8 L15.4 10.6Z" fill="#f47c3c"/></svg>

</body></html>
